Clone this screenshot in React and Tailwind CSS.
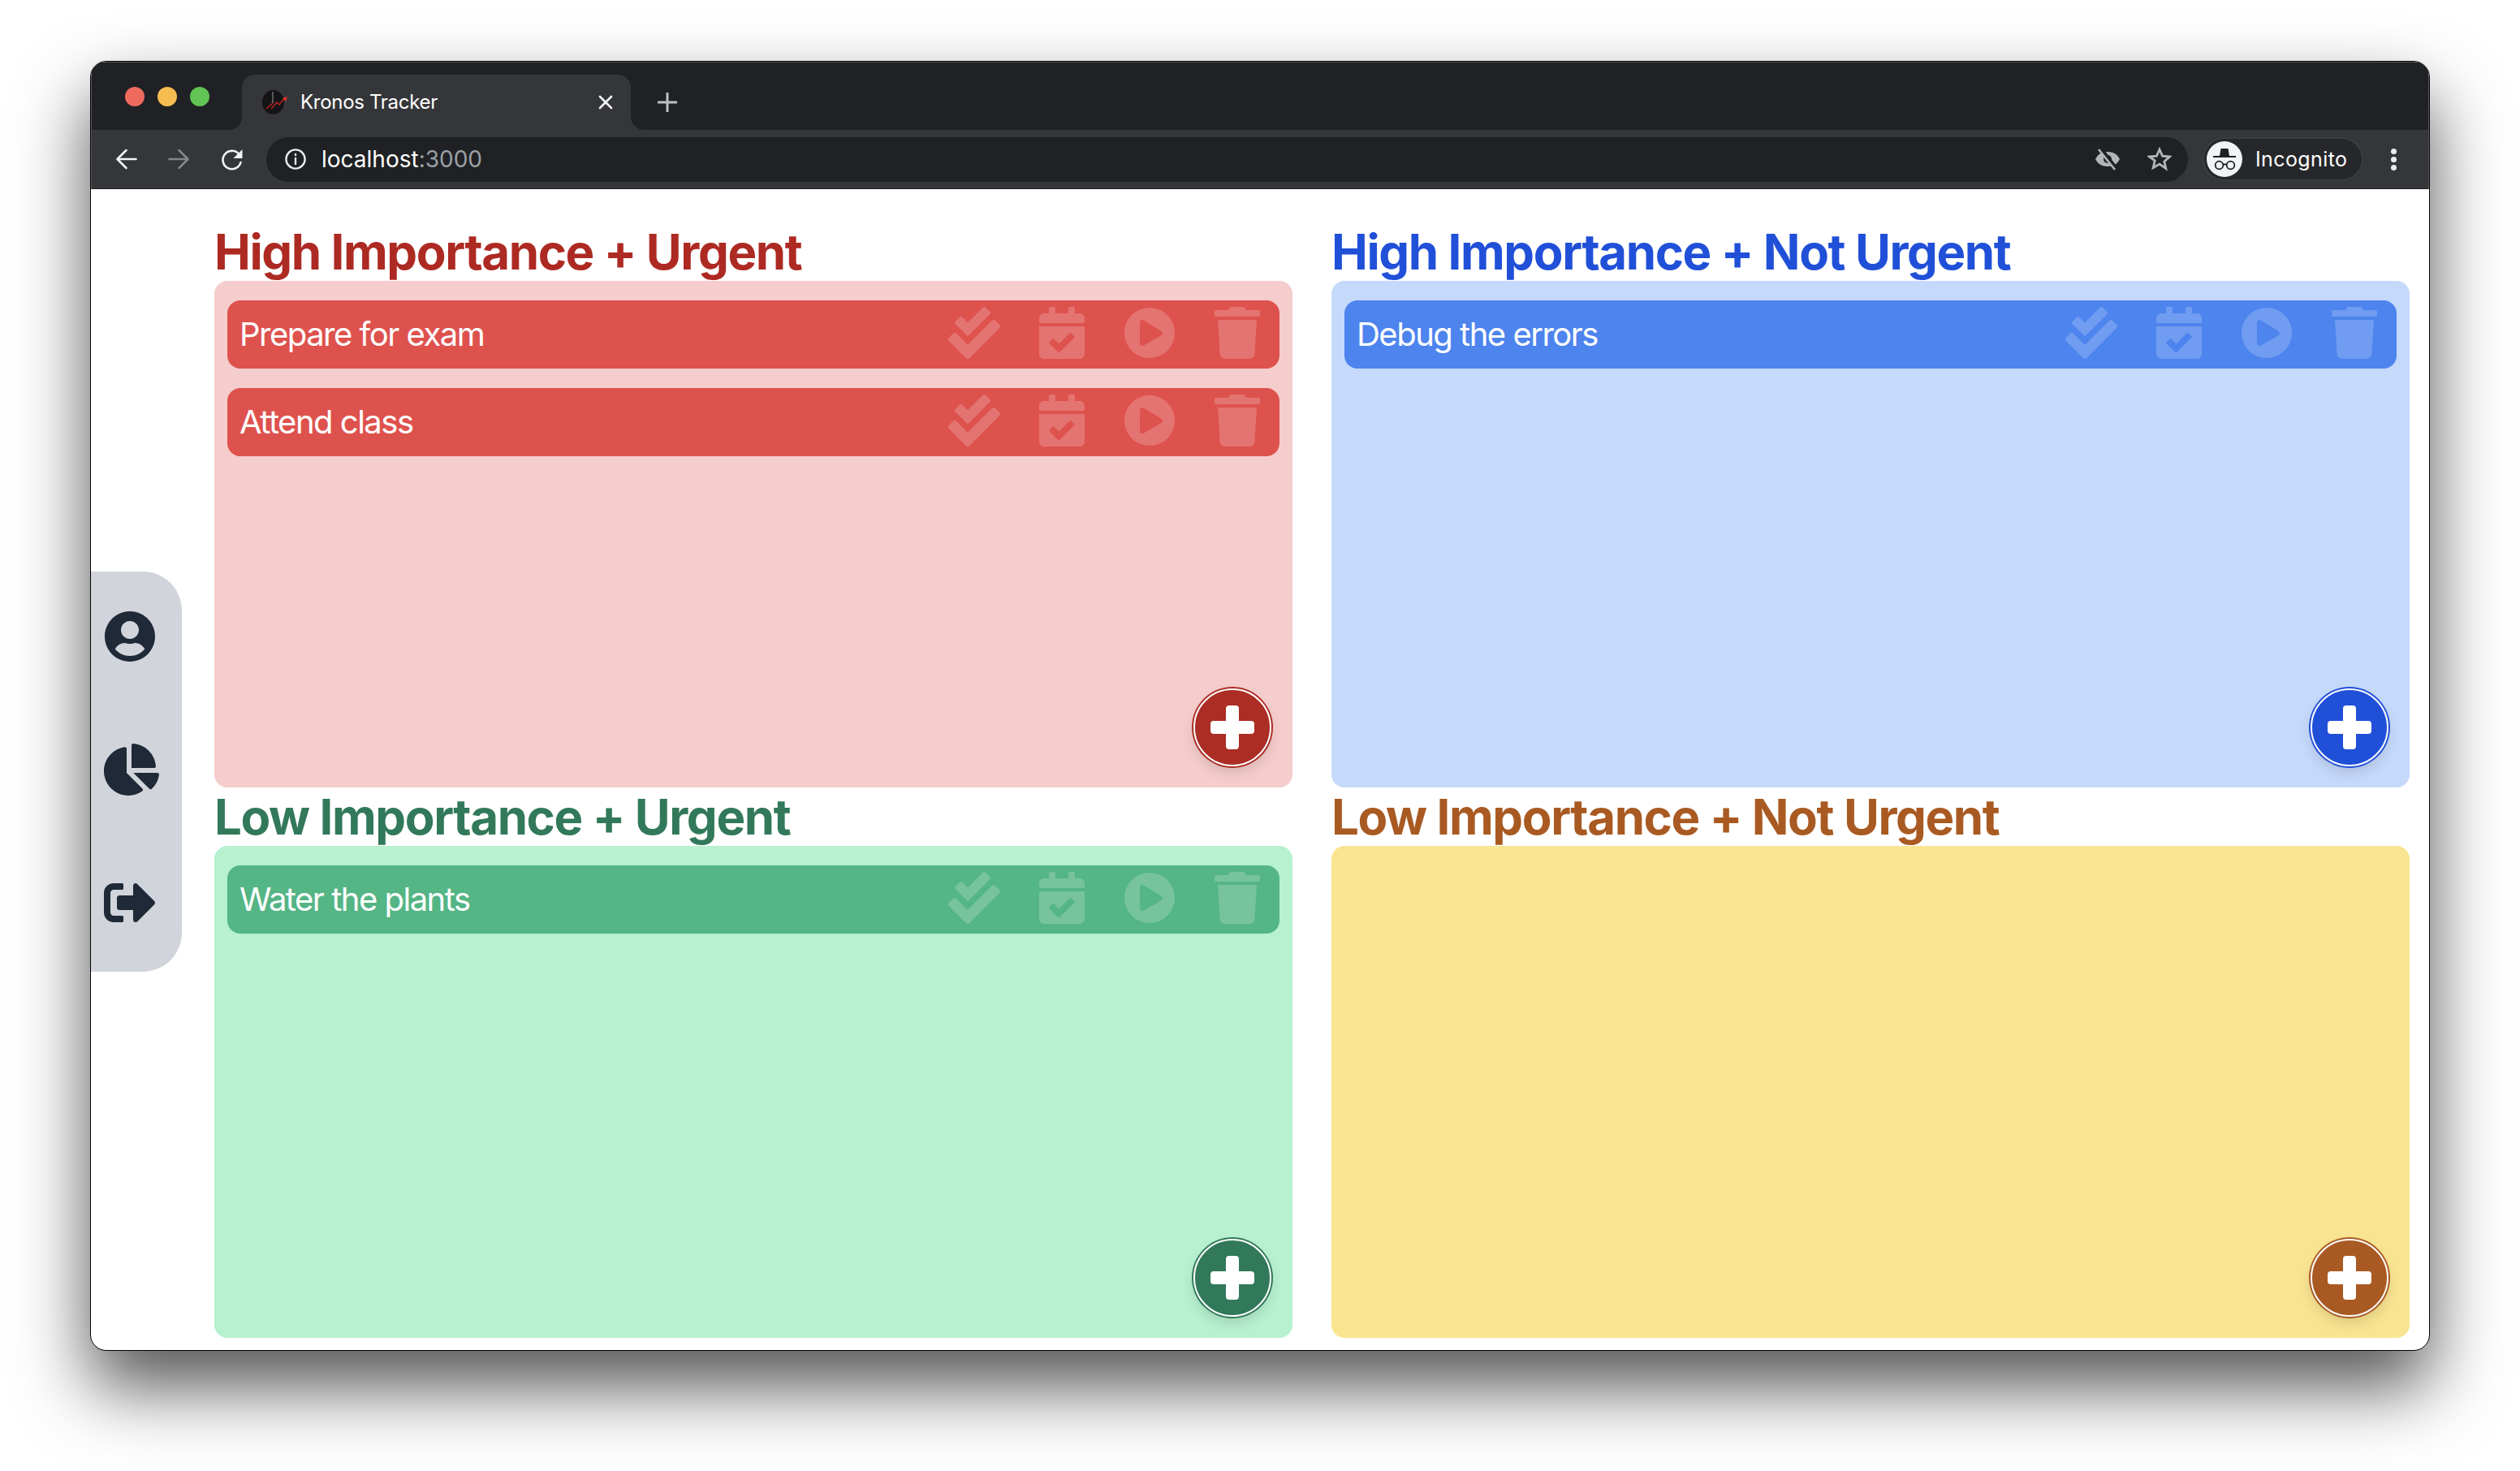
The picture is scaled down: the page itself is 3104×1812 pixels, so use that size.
import React from "react";
import { FaUserCircle, FaChartPie, FaSignOutAlt, FaCheckDouble, FaCalendarCheck, FaPlayCircle, FaTrash } from "react-icons/fa";

function Task({ title, bg }) {
  return (
    <div className={`flex h-[84px] items-center justify-between rounded-2xl pl-[15px] pr-5 ${bg}`}>
      <span className="text-[40px] leading-[56px] tracking-[-1.5px] text-white">{title}</span>
      <div className="mb-1 flex items-center gap-[44px] text-white/20">
        <FaCheckDouble size={64} />
        <FaCalendarCheck size={64} />
        <FaPlayCircle size={64} />
        <FaTrash size={64} />
      </div>
    </div>
  );
}

function AddButton({ bg }) {
  return (
    <button className={`absolute bottom-[26px] right-[26px] flex h-[96px] w-[96px] items-center justify-center rounded-full border-[2px] border-white shadow-[0_0_0_2px_var(--ring),0_8px_16px_rgba(0,0,0,0.12)] ${bg}`}>
      <svg width="54" height="54" viewBox="0 0 54 54" fill="white">
        <rect x="19" y="0" width="16" height="54" rx="4" />
        <rect x="0" y="19" width="54" height="16" rx="4" />
      </svg>
    </button>
  );
}

function Quadrant({ title, color, panel, row, fab, ring, tasks, grow }) {
  return (
    <section className={`flex flex-col ${grow}`}>
      <h2 className={`h-[72px] text-[60px] font-bold leading-[72px] tracking-[-1.4px] ${color}`}>{title}</h2>
      <div className={`relative flex-1 rounded-2xl px-4 py-6 ${panel}`}>
        <div className="flex flex-col gap-6">
          {tasks.map((t) => (
            <Task key={t} title={t} bg={row} />
          ))}
        </div>
        <div style={{ "--ring": ring }}>
          <AddButton bg={fab} />
        </div>
      </div>
    </section>
  );
}

function Favicon() {
  return (
    <svg width="28" height="30" viewBox="0 0 28 30" className="shrink-0 overflow-visible">
      <ellipse cx="13.500" cy="15" rx="13.500" ry="15" fill="#141416" />
      <path d="M13 2v14" stroke="#9a9a9a" strokeWidth="1" />
      <path d="M5 23l8-7M11 23l7-8 3 3 7-9" stroke="#c0221f" strokeWidth="1.4" fill="none" />
      <path d="M31 8l-6 2 4 4z" fill="#e0302b" />
    </svg>
  );
}

function BrowserBar() {
  return (
    <div className="shrink-0 border-x-[1px] border-t-[1px] border-[#57585b] font-['Inter',sans-serif]">
      <div className="flex h-[83px] bg-[#35363a]">
        <div className="flex w-[185px] items-center gap-4 rounded-br-2xl bg-[#202124] pl-[41px]">
          <span className="h-6 w-6 rounded-full bg-[#ee6a5f]" />
          <span className="h-6 w-6 rounded-full bg-[#f5bd4f]" />
          <span className="h-6 w-6 rounded-full bg-[#61c454]" />
        </div>
        <div className="w-[479px] bg-[#202124] pt-[15px]">
          <div className="flex h-[68px] items-center rounded-t-2xl bg-[#35363a] pl-[25px] pr-[22px] text-white">
            <Favicon />
            <span className="ml-[19px] flex-1 text-[24px] leading-8 tracking-[-0.3px]">Kronos Tracker</span>
            <svg width="18" height="18" viewBox="0 0 18 18" stroke="#f1f3f4" strokeWidth="2.6" strokeLinecap="round">
              <path d="M2 2l14 14M16 2L2 16" />
            </svg>
          </div>
        </div>
        <div className="flex flex-1 items-center rounded-bl-2xl bg-[#202124] pl-[33px] pt-[15px]">
          <svg width="24" height="24" viewBox="0 0 24 24" stroke="#bdc1c6" strokeWidth="3" strokeLinecap="round">
            <path d="M12 1v22M1 12h22" />
          </svg>
        </div>
      </div>
      <div className="flex h-[73px] items-center border-b-[1px] border-[#202124] bg-[#35363a] pl-[30px]">
        <svg width="26" height="26" viewBox="0 0 26 26" fill="none" stroke="#f1f3f4" strokeWidth="2.5" strokeLinecap="round" strokeLinejoin="round">
          <path d="M24.500 13H2M12.500 2L1.500 13l11 11" />
        </svg>
        <svg className="ml-[38px]" width="26" height="26" viewBox="0 0 26 26" fill="none" stroke="#85868a" strokeWidth="2.500" strokeLinecap="round" strokeLinejoin="round">
          <path d="M1.500 13H24M13.500 2l11 11-11 11" />
        </svg>
        <svg className="ml-[39px]" width="27" height="27" viewBox="0 0 27 27" fill="none">
          <path d="M24.500 17a11.200 11.200 0 1 1-2.500-10.500" stroke="#f1f3f4" strokeWidth="2.600" strokeLinecap="round" />
          <path d="M26.500 1v11h-11z" fill="#f1f3f4" />
        </svg>
        <div className="ml-[29px] flex h-[55px] w-[2367px] items-center rounded-full bg-[#202124] pl-[23px] pr-[20px]">
          <svg width="26" height="26" viewBox="0 0 26 26" fill="none" stroke="#e8eaed" strokeWidth="2.4" strokeLinecap="round">
            <circle cx="13" cy="13" r="11.6" />
            <path d="M13 12v7M13 7v1" />
          </svg>
          <span className="ml-[19px] flex-1 text-[28px] leading-9 text-white">
            localhost<span className="text-[#9aa0a6]">:3000</span>
          </span>
          <svg width="30" height="30" viewBox="0 0 30 30">
            <path d="M0 15c3-6 8-9 15-9s12 3 15 9c-3 6-8 9-15 9S3 21 0 15z" fill="#b3b5b8" />
            <circle cx="15" cy="15" r="5" fill="#202124" />
            <path d="M6 2l20 26" stroke="#202124" strokeWidth="5.500" />
            <path d="M4 3l20 25" stroke="#b3b5b8" strokeWidth="2.600" />
          </svg>
          <svg className="ml-[34px]" width="30" height="30" viewBox="0 0 30 30" fill="none" stroke="#b3b5b8" strokeWidth="2.8" strokeLinejoin="miter">
            <path d="M15 3l3.600 8.200 8.900.8-6.700 5.900 2 8.700L15 21.100 7.200 25.600l2-8.700L2.500 12l8.900-.8z" />
          </svg>
        </div>
        <div className="ml-[18px] flex h-[54px] w-[198px] items-center rounded-full border-[2px] border-[#3c3d41] bg-[#26272b] pl-[3px]">
          <svg width="44" height="44" viewBox="0 0 44 44" className="shrink-0">
            <circle cx="22" cy="22" r="22" fill="#f1f3f4" />
            <path d="M16 18l1.500-9h9l1.500 9z" fill="#202124" />
            <path d="M8 19h28" stroke="#202124" strokeWidth="2.200" />
            <circle cx="15.500" cy="29.500" r="4.800" fill="none" stroke="#202124" strokeWidth="1.800" />
            <circle cx="29.500" cy="29.500" r="4.800" fill="none" stroke="#202124" strokeWidth="1.800" />
            <path d="M20 28.500h4" stroke="#202124" strokeWidth="1.800" />
          </svg>
          <span className="ml-[16px] text-[25px] leading-8 tracking-[0.4px] text-white">Incognito</span>
        </div>
        <div className="ml-[34px] flex flex-col gap-[3px]">
          <span className="h-[7px] w-[7px] rounded-full bg-[#e8eaed]" />
          <span className="h-[7px] w-[7px] rounded-full bg-[#e8eaed]" />
          <span className="h-[7px] w-[7px] rounded-full bg-[#e8eaed]" />
        </div>
      </div>
    </div>
  );
}

export default function App() {
  return (
    <div className="h-[1812px] w-[3104px] overflow-hidden bg-white pl-[111px] pt-[75px] font-['Inter',sans-serif]">
      <div className="flex h-[1589px] w-[2882px] flex-col overflow-hidden rounded-[20px] border-[1px] border-black bg-white shadow-[0_44px_88px_rgba(0,0,0,0.68)]">
        <BrowserBar />
        <div className="flex min-h-0 flex-1 items-center">
          <nav className="mt-1 flex h-[493px] w-[112px] flex-col items-start justify-between rounded-r-[48px] bg-[#d1d5db] pb-[53px] pl-4 pt-[48px] text-[#1f2937]">
            <FaUserCircle size={64} />
            <FaChartPie size={68} />
            <FaSignOutAlt size={64} />
          </nav>
          <main className="ml-10 flex h-full w-[2704px] gap-12 pb-[15px] pt-[41px]">
            <div className="flex w-[1328px] flex-col">
              <Quadrant
                grow="h-[696px]"
                title="High Importance + Urgent"
                color="text-[#ad2a23]"
                panel="bg-[#f5cdcc]"
                row="bg-[#de524e]"
                fab="bg-[#ab2d24]"
                ring="#ab2d24"
                tasks={["Prepare for exam", "Attend class"]}
              />
              <Quadrant
                grow="flex-1"
                title="Low Importance + Urgent"
                color="text-[#31795a]"
                panel="bg-[#b7f1d0]"
                row="bg-[#54b585]"
                fab="bg-[#31795a]"
                ring="#31795a"
                tasks={["Water the plants"]}
              />
            </div>
            <div className="flex w-[1328px] flex-col">
              <Quadrant
                grow="h-[696px]"
                title="High Importance + Not Urgent"
                color="text-[#2150d8]"
                panel="bg-[#c5d9fb]"
                row="bg-[#4d84ee]"
                fab="bg-[#2150d8]"
                ring="#2150d8"
                tasks={["Debug the errors"]}
              />
              <Quadrant
                grow="flex-1"
                title="Low Importance + Not Urgent"
                color="text-[#a95a22]"
                panel="bg-[#f9e491]"
                row="bg-[#d9a83f]"
                fab="bg-[#a95a22]"
                ring="#a95a22"
                tasks={[]}
              />
            </div>
          </main>
        </div>
      </div>
    </div>
  );
}
